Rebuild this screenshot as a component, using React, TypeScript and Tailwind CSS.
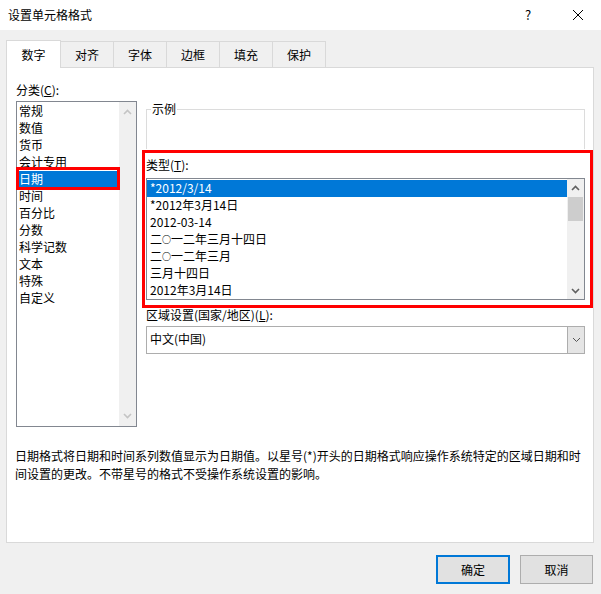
import React from 'react';

const categories = ['常规', '数值', '货币', '会计专用', '日期', '时间', '百分比', '分数', '科学记数', '文本', '特殊', '自定义'];
const types = ['*2012/3/14', '*2012年3月14日', '2012-03-14', '二○一二年三月十四日', '二○一二年三月', '三月十四日', '2012年3月14日'];
const tabs = ['数字', '对齐', '字体', '边框', '填充', '保护'];

function Chevron({ dir, color = '#606060' }: { dir: 'up' | 'down'; color?: string }) {
  return (
    <svg width="9" height="6" viewBox="0 0 9 6">
      {dir === 'up' ? (
        <polyline points="1,5 4.5,1.5 8,5" fill="none" stroke={color} strokeWidth="1.6" />
      ) : (
        <polyline points="1,1 4.5,4.5 8,1" fill="none" stroke={color} strokeWidth="1.6" />
      )}
    </svg>
  );
}

// 小圆圈 "○" 在原图中显示得较小
function TypeLabel({ text }: { text: string }) {
  const parts = text.split('○');
  return (
    <>
      {parts.map((p, i) => (
        <React.Fragment key={i}>
          {i > 0 && <span className="text-[9px] align-[1px] font-bold">○</span>}
          {p}
        </React.Fragment>
      ))}
    </>
  );
}

export default function App() {
  return (
    <div
      className="relative w-[601px] h-[594px] bg-[#f0f0f0] text-[12px] text-black overflow-hidden"
      style={{ fontFamily: '"Noto Sans CJK SC", "Noto Sans", sans-serif' }}
    >
      {/* 标题栏 */}
      <div className="h-[30px] bg-white flex items-center pl-[8px]">
        <span className="leading-[16px]">设置单元格格式</span>
        <div className="ml-auto flex items-center">
          <span className="w-[12px] text-center text-[13px] leading-[16px] mr-[38px]">?</span>
          <svg width="12" height="12" viewBox="0 0 12 12" className="mr-[17px]">
            <path d="M1 1 L11 11 M11 1 L1 11" stroke="#000" strokeWidth="1" />
          </svg>
        </div>
      </div>

      {/* 选项卡 */}
      <div className="flex items-end pl-[6px] mt-[9px] h-[28px]">
        {tabs.map((t, i) =>
          i === 0 ? (
            <div
              key={t}
              className="relative z-10 w-[55px] h-[28px] -mb-px bg-white border border-[#d9d9d9] border-b-0 flex items-center justify-center leading-[16px]"
            >
              {t}
            </div>
          ) : (
            <div
              key={t}
              className="w-[54px] h-[26px] -ml-px bg-[#f0f0f0] border border-[#d9d9d9] border-b-0 flex items-center justify-center leading-[16px]"
            >
              {t}
            </div>
          )
        )}
      </div>

      {/* 面板 */}
      <div className="ml-[6px] w-[588px] h-[476px] bg-white border border-[#d9d9d9] pl-[9px] pt-[13px]">
        <div className="flex">
          {/* 分类 */}
          <div className="flex flex-col">
            <div className="leading-[17px] h-[17px]">
              分类(<span className="underline">C</span>):
            </div>
            <div className="mt-[3px] w-[121px] h-[326px] border border-[#828790] flex">
              <div className="flex-1 pt-[1px] flex flex-col">
                {categories.map((c) => (
                  <div
                    key={c}
                    className={`h-[17px] leading-[16px] pl-[1px] mx-px ${c === '日期' ? 'bg-[#0078d7] text-white' : ''}`}
                  >
                    {c}
                  </div>
                ))}
              </div>
              <div className="w-[17px] bg-[#f0f0f0] flex flex-col items-center justify-between py-[7px]">
                <Chevron dir="up" color="#c4c4c4" />
                <Chevron dir="down" color="#c4c4c4" />
              </div>
            </div>
          </div>

          {/* 右侧 */}
          <div className="ml-[9px] w-[439px] flex flex-col pt-[28px]">
            <div className="relative h-[40px] border border-[#dcdcdc] border-b-0">
              <span className="absolute -top-[9px] left-[4px] bg-white px-[1px] leading-[16px]">示例</span>
            </div>
            <div className="mt-[7px] leading-[17px] h-[17px]">
              类型(<span className="underline">T</span>):
            </div>
            <div className="mt-[5px] h-[122px] border border-[#828790] flex">
              <div className="flex-1 pt-[1px] flex flex-col">
                {types.map((t, i) => (
                  <div
                    key={t}
                    className={`h-[17px] leading-[16px] pl-[3px] ${i === 0 ? 'bg-[#0078d7] text-white' : ''}`}
                  >
                    <TypeLabel text={t} />
                  </div>
                ))}
              </div>
              <div className="w-[17px] bg-[#f0f0f0] flex flex-col items-center">
                <div className="h-[18px] flex items-center justify-center">
                  <Chevron dir="up" />
                </div>
                <div className="w-[15px] h-[24px] bg-[#cdcdcd]" />
                <div className="mt-auto h-[17px] flex items-center justify-center">
                  <Chevron dir="down" />
                </div>
              </div>
            </div>
            <div className="mt-[6px] leading-[17px] h-[17px]">
              区域设置(国家/地区)(<span className="underline">L</span>):
            </div>
            <div className="mt-[3px] h-[28px] border border-[#adadad] flex">
              <div className="flex-1 pl-[3px] flex items-center leading-[16px] pb-[2px]">中文(中国)</div>
              <div className="w-[17px] bg-[#e5e5e5] border-l border-[#adadad] flex items-center justify-center">
                <svg width="9" height="6" viewBox="0 0 9 6">
                  <polyline points="1,1 4.5,4.5 8,1" fill="none" stroke="#555" strokeWidth="1" />
                </svg>
              </div>
            </div>
          </div>
        </div>

        <p className="mt-[20px] -ml-px w-[566px] leading-[18px]">
          日期格式将日期和时间系列数值显示为日期值。以星号(*)开头的日期格式响应操作系统特定的区域日期和时间设置的更改。不带星号的格式不受操作系统设置的影响。
        </p>
      </div>

      {/* 按钮 */}
      <div className="flex justify-end gap-[10px] pr-[8px] mt-[12px]">
        <button className="w-[74px] h-[29px] bg-[#e1e1e1] border-2 border-[#0078d7] leading-[16px]">确定</button>
        <button className="w-[73px] h-[29px] bg-[#e1e1e1] border border-[#adadad] leading-[16px]">取消</button>
      </div>

      {/* 红色标注框 */}
      <div className="absolute left-[16px] top-[167px] w-[104px] h-[23px] border-[3px] border-[#ff0000] pointer-events-none" />
      <div className="absolute left-[142px] top-[150px] w-[451px] h-[158px] border-[3px] border-[#ff0000] pointer-events-none" />
    </div>
  );
}
